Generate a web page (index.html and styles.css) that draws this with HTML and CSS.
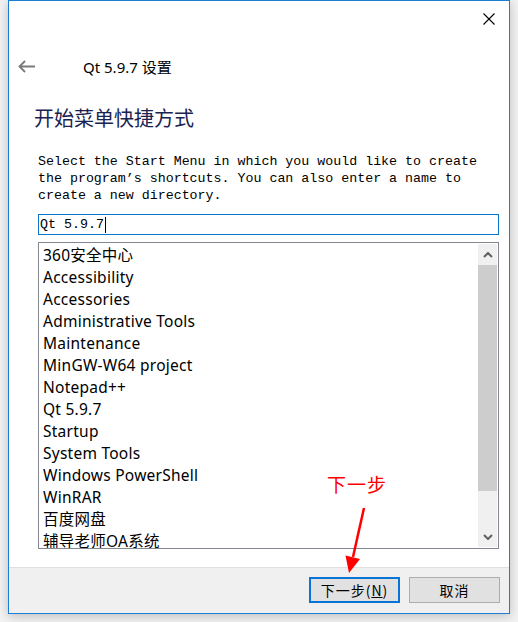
FILE: index.html
```html
<!DOCTYPE html>
<html lang="zh">
<head>
<meta charset="utf-8">
<title>Qt 5.9.7 设置</title>
<link rel="stylesheet" href="styles.css">
</head>
<body>
<div class="window">
  <div class="titlebar">
    <span class="close">
      <svg width="12" height="12" viewBox="0 0 12 12"><path d="M0.5 0.5 L11.5 11.5 M11.5 0.5 L0.5 11.5" stroke="#000" stroke-width="1.1" fill="none"/></svg>
    </span>
  </div>
  <div class="nav">
    <svg class="back" width="17" height="13" viewBox="0 0 17 13"><path d="M1.5 6.5 H17 M7 1 L1.5 6.5 L7 12" stroke="#7a7a7a" stroke-width="1.8" fill="none"/></svg>
    <span class="title">Qt 5.9.7 设置</span>
  </div>
  <div class="content">
    <h1 class="heading">开始菜单快捷方式</h1>
    <p class="desc">Select the Start Menu in which you would like to create<br>the program’s shortcuts. You can also enter a name to<br>create a new directory.</p>
    <div class="input"><span>Qt 5.9.7</span><span class="caret"></span></div>
    <div class="listbox">
      <ul class="items">
        <li>360安全中心</li>
        <li>Accessibility</li>
        <li>Accessories</li>
        <li>Administrative Tools</li>
        <li>Maintenance</li>
        <li>MinGW-W64 project</li>
        <li>Notepad++</li>
        <li>Qt 5.9.7</li>
        <li>Startup</li>
        <li>System Tools</li>
        <li>Windows PowerShell</li>
        <li>WinRAR</li>
        <li>百度网盘</li>
        <li>辅导老师OA系统</li>
      </ul>
      <div class="scrollbar">
        <div class="sb-btn">
          <svg width="10" height="6" viewBox="0 0 10 6"><path d="M1 5 L5 1 L9 5" stroke="#606060" stroke-width="2" fill="none"/></svg>
        </div>
        <div class="sb-thumb"></div>
        <div class="sb-track"></div>
        <div class="sb-btn">
          <svg width="10" height="6" viewBox="0 0 10 6"><path d="M1 1 L5 5 L9 1" stroke="#606060" stroke-width="2" fill="none"/></svg>
        </div>
      </div>
    </div>
  </div>
  <div class="footer">
    <button class="btn primary">下一步(<u>N</u>)</button>
    <button class="btn">取消</button>
  </div>
  <div class="annotation">下一步</div>
  <svg class="arrow" width="500" height="612" viewBox="0 0 500 612">
    <path d="M355 507 L344 556" stroke="#ff0000" stroke-width="2.5" fill="none"/>
    <polygon points="340,572 336.5,554.5 351,558" fill="#ff0000"/>
  </svg>
</div>
</body>
</html>
```

FILE: styles.css
```css
* { box-sizing: border-box; }
html, body { margin: 0; padding: 0; }
body {
  background: #f2f2f2;
  width: 518px;
  height: 622px;
  overflow: hidden;
  font-family: "Noto Sans", "Noto Sans CJK SC", sans-serif;
}
.window {
  position: relative;
  margin-left: 8px;
  width: 502px;
  height: 614px;
  border: 1px solid #1a7fd4;
  background: #fff;
  display: flex;
  flex-direction: column;
  box-shadow: 0 2px 10px rgba(0, 0, 0, 0.22);
}
.titlebar {
  height: 32px;
  display: flex;
  justify-content: flex-end;
  align-items: flex-start;
  padding: 12px 14px 0 0;
}
.close { display: block; width: 12px; height: 12px; }
.close svg { display: block; }
.nav {
  margin-top: 24px;
  height: 20px;
  display: flex;
  align-items: center;
  padding-left: 9px;
}
.back { display: block; margin-top: -1px; }
.title {
  margin-left: 48px;
  font-size: 15px;
  line-height: 20px;
  color: #000;
  font-family: "Noto Sans", "Noto Sans CJK SC", sans-serif;
}
.content {
  flex: 1;
  padding: 0 10px 0 29px;
  display: flex;
  flex-direction: column;
}
.heading {
  margin: 28px 0 0 -4px;
  font-size: 20px;
  line-height: 26px;
  font-weight: normal;
  color: #1a2350;
  font-family: "Noto Sans CJK SC", sans-serif;
}
.desc {
  margin: 22px 0 0 0;
  font-family: "Liberation Mono", "Noto Sans CJK SC", monospace;
  font-size: 13.3px;
  line-height: 17px;
  color: #000;
  white-space: nowrap;
}
.input {
  margin-top: 10px;
  height: 21px;
  border: 1px solid #0a74d0;
  display: flex;
  align-items: center;
  padding-left: 1px;
  font-family: "Liberation Mono", monospace;
  font-size: 13.33px;
  color: #000;
}
.caret {
  display: inline-block;
  width: 1px;
  height: 16px;
  background: #000;
  margin-left: 1px;
}
.listbox {
  margin-top: 7px;
  height: 307px;
  border: 1px solid #828790;
  display: flex;
  overflow: hidden;
}
.items {
  flex: 1;
  list-style: none;
  margin: 0;
  padding: 1px 0 0 4px;
  overflow: hidden;
}
.items li {
  height: 22px;
  line-height: 22px;
  font-size: 15.5px;
  letter-spacing: 0.25px;
  color: #000;
  white-space: nowrap;
}
.scrollbar {
  width: 19px;
  margin: 1px 1px 1px 0;
  background: #f0f0f0;
  display: flex;
  flex-direction: column;
}
.sb-btn {
  height: 21px;
  display: flex;
  align-items: center;
  justify-content: center;
}
.sb-btn svg { display: block; }
.sb-thumb {
  height: 226px;
  background: #cdcdcd;
}
.sb-track { flex: 1; }
.footer {
  height: 46px;
  border-top: 1px solid #dfdfdf;
  background: #f0f0f0;
  display: flex;
  justify-content: flex-end;
  align-items: flex-start;
  gap: 9px;
  padding: 9px 9px 0 0;
}
.btn {
  width: 91px;
  height: 26px;
  margin: 0;
  padding: 0;
  background: #e1e1e1;
  border: 1px solid #adadad;
  font-family: "Noto Sans CJK SC", sans-serif;
  font-size: 14px;
  color: #000;
  line-height: 1;
  letter-spacing: 1px;
}
.btn.primary {
  border: 2px solid #0a74d6;
}
.annotation {
  position: absolute;
  left: 318px;
  top: 473px;
  font-family: "Noto Sans CJK SC", sans-serif;
  font-size: 19px;
  line-height: 19px;
  color: #ff0000;
  letter-spacing: 1px;
}
.arrow {
  position: absolute;
  left: 0;
  top: 0;
  pointer-events: none;
}
```
